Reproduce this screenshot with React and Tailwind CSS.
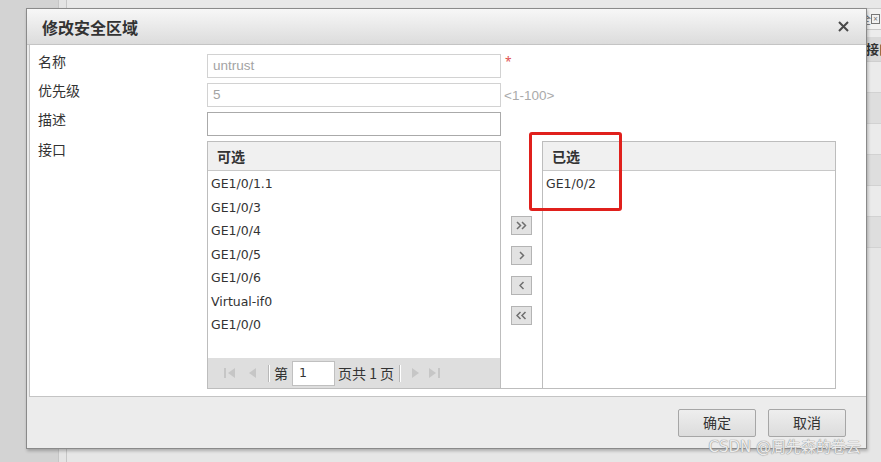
import React from 'react';

const cjk = { fontFamily: '"Noto Sans CJK SC", "Microsoft YaHei", sans-serif' };
const mixed = { fontFamily: '"DejaVu Sans", "Noto Sans CJK SC", sans-serif' };
const arial = { fontFamily: '"Liberation Sans", Arial, sans-serif' };

const available = ['GE1/0/1.1', 'GE1/0/3', 'GE1/0/4', 'GE1/0/5', 'GE1/0/6', 'Virtual-if0', 'GE1/0/0'];
const selected = ['GE1/0/2'];

function PagerIcon({ type }) {
  // disabled pager arrows, drawn light grey
  const fill = '#c6c6c6';
  if (type === 'first')
    return (
      <svg width="14" height="14" viewBox="0 0 14 14">
        <rect x="1" y="2" width="2" height="10" fill={fill} />
        <path d="M12 2 L5 7 L12 12 Z" fill={fill} />
      </svg>
    );
  if (type === 'prev')
    return (
      <svg width="10" height="14" viewBox="0 0 10 14">
        <path d="M9 2 L2 7 L9 12 Z" fill={fill} />
      </svg>
    );
  if (type === 'next')
    return (
      <svg width="10" height="14" viewBox="0 0 10 14">
        <path d="M1 2 L8 7 L1 12 Z" fill={fill} />
      </svg>
    );
  return (
    <svg width="14" height="14" viewBox="0 0 14 14">
      <path d="M2 2 L9 7 L2 12 Z" fill={fill} />
      <rect x="11" y="2" width="2" height="10" fill={fill} />
    </svg>
  );
}

function MoveButton({ children }) {
  return (
    <div className="w-[21px] h-[19px] bg-[#e2e2e2] border border-[#b4b4b4] flex items-center justify-center">
      {children}
    </div>
  );
}

function Chevron({ dir, double }) {
  const one = dir === 'right' ? 'M0 0 L3.5 3.5 L0 7' : 'M3.5 0 L0 3.5 L3.5 7';
  return (
    <svg width={double ? 11 : 6} height="9" viewBox={double ? '-1 -1 11 9' : '-1 -1 6 9'}>
      <path d={one} fill="none" stroke="#6e6e6e" strokeWidth="1.5" />
      {double && <path d={one} transform="translate(5 0)" fill="none" stroke="#6e6e6e" strokeWidth="1.5" />}
    </svg>
  );
}

function ListBox({ title, items, pager }) {
  return (
    <div className="w-[294px] h-[248px] border border-[#bdbdbd] flex flex-col bg-white">
      <div className="h-[29px] shrink-0 bg-[#f0f0f0] border-b border-[#c8c8c8] flex items-center pl-[9px] text-[14px] font-bold text-[#333]" style={cjk}>
        {title}
      </div>
      <div className="flex-1 pt-[2px]">
        {items.map((it) => (
          <div key={it} className="h-[23.5px] flex items-center pl-[3px] text-[12.5px] text-[#333]" style={mixed}>
            {it}
          </div>
        ))}
      </div>
      {pager && (
        <div className="h-[30px] shrink-0 bg-[#dedede] flex items-center pl-[15px] text-[14px] text-[#333]" style={cjk}>
          <PagerIcon type="first" />
          <span className="w-[10px]" />
          <PagerIcon type="prev" />
          <span className="ml-[11px] mr-[4px] w-px h-[17px] bg-[#b8b8b8] border-r border-white box-content" />
          <span>第</span>
          <div className="ml-[4px] w-[43px] h-[25px] bg-white border border-[#c0c0c0] flex items-center pl-[6px]" style={mixed}>
            <span className="text-[12.5px]">1</span>
          </div>
          <span className="ml-[3px]">页共 1 页</span>
          <span className="ml-[5px] mr-[10px] w-px h-[17px] bg-[#b8b8b8] border-r border-white box-content" />
          <PagerIcon type="next" />
          <span className="w-[6px]" />
          <PagerIcon type="last" />
        </div>
      )}
    </div>
  );
}

function FormRow({ label, children }) {
  return (
    <div className="flex">
      <div className="w-[169px] shrink-0 text-[14px] leading-[15px] text-[#333]" style={cjk}>{label}</div>
      {children}
    </div>
  );
}

export default function App() {
  return (
    <div className="relative w-[881px] h-[462px] overflow-hidden flex bg-[#e6e6e6]">
      {/* page behind the modal */}
      <div className="w-[58px] shrink-0 bg-[#d3d3d3]" />
      <div className="w-[9px] shrink-0 bg-[#e4e4e4] border-l border-[#c6c6c6] border-r" />
      <div className="flex-1 flex flex-col">
        <div className="h-[8px] bg-[#e8e8e8]" />
        <div className="h-[22px] bg-[#f2f2f2] border-y border-[#c8c8c8] flex justify-end items-center pr-[1px]">
          <span className="text-[12px] text-[#666]" style={cjk}>全</span>
          <span className="w-[9px] h-[10px] border border-[#777] text-[8px] leading-[8px] text-center text-[#777]">×</span>
        </div>
        <div className="h-[7px] bg-[#ececec]" />
        <div className="h-[25px] bg-[#d9d9d9] border-b border-[#cfcfcf] flex justify-end items-center">
          <span className="w-[40px] pl-[25px] whitespace-nowrap text-[13px] font-bold text-[#333]" style={cjk}>
            接口
          </span>
        </div>
        {[0, 1, 2, 3, 4, 5].map((i) => (
          <div key={i} className={`h-[31px] border-b border-[#d2d2d2] ${i % 2 ? 'bg-[#dedede]' : 'bg-[#ebebeb]'}`} />
        ))}
      </div>

      {/* modal dialog */}
      <div className="absolute left-[26px] top-[8px] w-[841px] h-[441px] border border-[#8a8a8a] bg-[#ececec] flex flex-col shadow-[1px_2px_3px_rgba(0,0,0,0.25)]">
        <div className="h-[36px] shrink-0 border-b border-[#c4c4c4] bg-gradient-to-b from-[#f7f7f7] to-[#dcdcdc] flex items-center justify-between pl-[15px] pr-[17px]">
          <span className="text-[16px] font-bold text-[#333]" style={cjk}>修改安全区域</span>
          <svg width="11" height="11" viewBox="0 0 11 11">
            <path d="M1 1 L10 10 M10 1 L1 10" stroke="#4a4a4a" strokeWidth="2" />
          </svg>
        </div>

        <div className="h-[352px] shrink-0 ml-[2px] bg-white border-l border-b border-[#c4c4c4] pl-[8px] pt-[9px] flex flex-col gap-[5px]">
          <FormRow label="名称">
            <div className="w-[294px] h-[24px] border border-[#d2d2d2] flex items-center pl-[5px] text-[13.5px] text-[#a3a3a3]" style={arial}>untrust</div>
            <span className="ml-[4px] text-[12px] text-[#e05050] leading-[16px]">*</span>
          </FormRow>
          <FormRow label="优先级">
            <div className="w-[294px] h-[24px] border border-[#d2d2d2] flex items-center pl-[5px] text-[13.5px] text-[#a3a3a3]" style={arial}>5</div>
            <span className="ml-[3px] mt-[5px] text-[13.5px] text-[#aaaaaa] leading-[16px]" style={arial}>&lt;1-100&gt;</span>
          </FormRow>
          <FormRow label="描述">
            <div className="w-[294px] h-[24px] border border-[#aaaaaa] bg-white" />
          </FormRow>
          <FormRow label={<span className="block pt-[1px]">接口</span>}>
            <div className="flex">
              <ListBox title="可选" items={available} pager />
              <div className="w-[41px] h-[248px] flex flex-col items-start pl-[10px] pt-[75px] gap-[11px] border-b border-[#bdbdbd]">
                <MoveButton><Chevron dir="right" double /></MoveButton>
                <MoveButton><Chevron dir="right" /></MoveButton>
                <MoveButton><Chevron dir="left" /></MoveButton>
                <MoveButton><Chevron dir="left" double /></MoveButton>
              </div>
              <ListBox title="已选" items={selected} />
            </div>
          </FormRow>
        </div>

        <div className="flex-1 flex items-center justify-end gap-[12px] pr-[20px]">
          {['确定', '取消'].map((t) => (
            <div key={t} className="w-[78px] h-[28px] rounded-[2px] border border-[#a6a6a6] bg-gradient-to-b from-[#eeeeee] to-[#dcdcdc] flex items-center justify-center text-[14px] text-[#333]" style={cjk}>
              {t}
            </div>
          ))}
        </div>
      </div>

      {/* red annotation box */}
      <div className="absolute left-[529px] top-[132px] w-[93px] h-[79px] border-[3px] border-[#e0201c] rounded-[3px]" />

      {/* watermark */}
      <div className="absolute right-[20px] bottom-[4px] text-[15px] text-[#ececec] [text-shadow:0_0_1px_#8a8a8a,0_0_1px_#8a8a8a]" style={mixed}>
        CSDN @周先森的卷云
      </div>
    </div>
  );
}
